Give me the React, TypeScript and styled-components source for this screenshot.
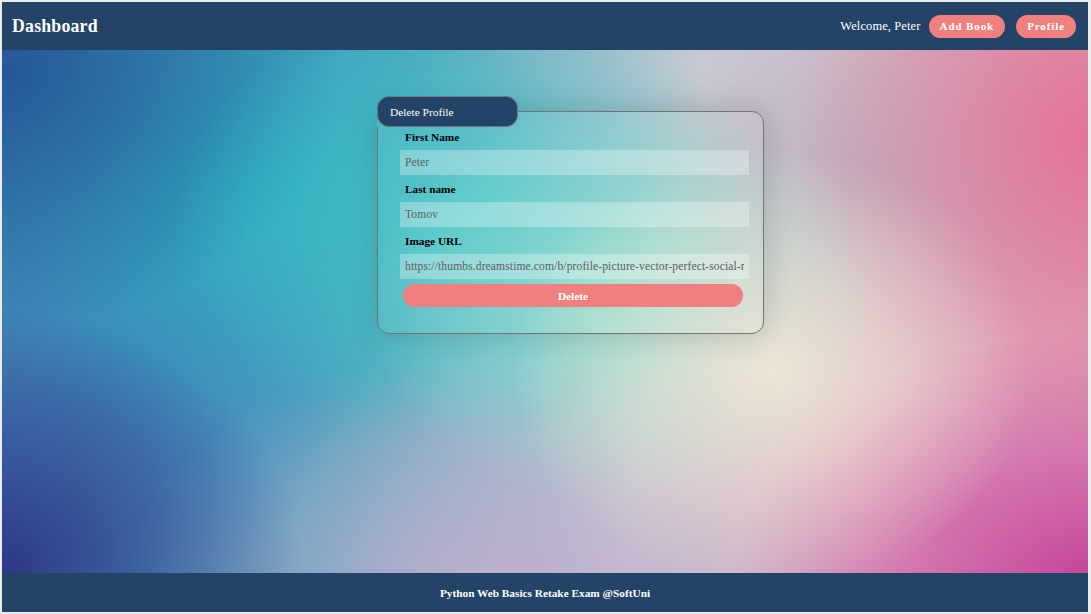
import styled, { createGlobalStyle } from "styled-components";

const GlobalStyle = createGlobalStyle`
  html, body {
    margin: 0;
    padding: 0;
    background: #ececec;
  }
  body {
    padding: 2px 3px 2px 2px;
    font-family: "Liberation Serif", "Times New Roman", serif;
  }
`

const Page = styled.div`
  height: 610px;
  display: flex;
  flex-direction: column;
  overflow: hidden;
`

const Header = styled.header`
  height: 48px;
  flex: none;
  background-color: #234466;
  display: flex;
  align-items: center;
  justify-content: space-between;
  padding: 0 12px 0 10px;
  color: #fff;
`

const Brand = styled.h1`
  margin: 0;
  font-size: 17.8px;
  font-weight: bold;
  letter-spacing: 0.2px;
`

const Nav = styled.nav`
  display: flex;
  align-items: center;
  gap: 8px;
`

const Welcome = styled.span`
  font-size: 12.4px;
  letter-spacing: 0.15px;
`

const PillButton = styled.button<{ $push?: number }>`
  height: 23px;
  padding: 0 11px;
  margin-left: ${(p) => p.$push ?? 0}px;
  border: none;
  border-radius: 12px;
  background-color: #f08080;
  color: #fff;
  font-family: inherit;
  font-size: 11px;
  font-weight: bold;
  letter-spacing: 0.9px;
`

const Main = styled.main`
  flex: 1;
  padding: 46px 0 0 375px;
  background:
    radial-gradient(ellipse 260px 220px at 770px 320px, rgba(238, 230, 212, 0.95), rgba(238, 230, 212, 0) 100%),
    radial-gradient(ellipse 260px 200px at 620px 250px, rgba(140, 224, 206, 0.85), rgba(140, 224, 206, 0) 100%),
    radial-gradient(ellipse 300px 220px at 470px 170px, rgba(70, 200, 200, 0.85), rgba(70, 200, 200, 0) 100%),
    radial-gradient(ellipse 300px 320px at 1091px 90px, rgba(226, 112, 148, 0.95), rgba(226, 112, 148, 0) 100%),
    radial-gradient(ellipse 360px 260px at 1091px 540px, rgba(195, 60, 152, 0.95), rgba(195, 60, 152, 0) 100%),
    radial-gradient(ellipse 300px 260px at 0px 520px, rgba(46, 52, 132, 0.95), rgba(46, 52, 132, 0) 100%),
    radial-gradient(ellipse 340px 260px at 0px 20px, rgba(36, 86, 150, 0.95), rgba(36, 86, 150, 0) 100%),
    radial-gradient(ellipse 320px 280px at 250px 130px, rgba(40, 172, 190, 0.95), rgba(40, 172, 190, 0) 100%),
    radial-gradient(ellipse 260px 220px at 90px 330px, rgba(66, 128, 186, 0.9), rgba(66, 128, 186, 0) 100%),
    radial-gradient(ellipse 380px 240px at 500px 540px, rgba(192, 172, 204, 0.95), rgba(192, 172, 204, 0) 100%),
    radial-gradient(ellipse 280px 260px at 920px 430px, rgba(228, 166, 192, 0.9), rgba(228, 166, 192, 0) 100%),
    radial-gradient(ellipse 240px 200px at 860px 140px, rgba(186, 176, 192, 0.9), rgba(186, 176, 192, 0) 100%),
    linear-gradient(100deg, #3d7cb6 0%, #5aa6c0 35%, #c9ccd2 60%, #e0a0b8 100%);
`

const Card = styled.fieldset`
  width: 386px;
  margin: 0;
  padding: 0;
  box-sizing: border-box;
  border: 1px solid #747474;
  border-radius: 12px;
  background-color: rgba(255, 255, 255, 0.06);
  box-shadow: 0 0 28px rgba(40, 50, 70, 0.22);
`

const Legend = styled.legend`
  box-sizing: border-box;
  width: 141px;
  height: 31px;
  margin-left: -1px;
  padding: 1px 12px 0;
  line-height: 29px;
  border: 1px solid #6f7780;
  border-radius: 12px;
  background-color: #234466;
  color: #fff;
  font-size: 11.4px;
`

const Form = styled.form`
  display: flex;
  flex-direction: column;
  gap: 6px;
  padding: 2px 14px 26px 22px;
`

const Field = styled.div`
  display: flex;
  flex-direction: column;
`

const Label = styled.label`
  display: block;
  line-height: 16px;
  padding-left: 5px;
  margin-bottom: 5px;
  font-size: 11.3px;
  font-weight: bold;
  color: #000;
`

const Input = styled.input`
  box-sizing: border-box;
  width: 349px;
  height: 25px;
  padding: 0 5px;
  border: none;
  outline: none;
  background-color: rgba(255, 255, 255, 0.3);
  color: #5e5e5e;
  font-family: inherit;
  font-size: 11.6px;
  letter-spacing: 0.1px;
`

const DeleteButton = styled.button`
  width: 340px;
  height: 23px;
  margin: -1px 0 0 3px;
  border: none;
  border-radius: 12px;
  background-color: #f08080;
  color: #fff;
  font-family: inherit;
  font-size: 11.3px;
  font-weight: bold;
`

const Footer = styled.footer`
  height: 39px;
  flex: none;
  background-color: #234466;
  display: flex;
  align-items: center;
  justify-content: center;
  color: #fff;
  font-size: 11.3px;
  font-weight: bold;
`

const fields = [
  { id: "first_name", label: "First Name", value: "Peter" },
  { id: "last_name", label: "Last name", value: "Tomov" },
  {
    id: "image_url",
    label: "Image URL",
    value: "https://thumbs.dreamstime.com/b/profile-picture-vector-perfect-social-media-and-other-web-use-125320944.jpg",
  },
];

function App() {
  return (
    <Page>
      <GlobalStyle />
      <Header>
        <Brand>Dashboard</Brand>
        <Nav>
          <Welcome>Welcome, Peter</Welcome>
          <PillButton>Add Book</PillButton>
          <PillButton $push={3}>Profile</PillButton>
        </Nav>
      </Header>
      <Main>
        <Card>
          <Legend>Delete Profile</Legend>
          <Form onSubmit={(e) => e.preventDefault()}>
            {fields.map((f) => (
              <Field key={f.id}>
                <Label htmlFor={f.id}>{f.label}</Label>
                <Input id={f.id} defaultValue={f.value} disabled />
              </Field>
            ))}
            <DeleteButton type="submit">Delete</DeleteButton>
          </Form>
        </Card>
      </Main>
      <Footer>Python Web Basics Retake Exam @SoftUni</Footer>
    </Page>
  );
}

export default App;
